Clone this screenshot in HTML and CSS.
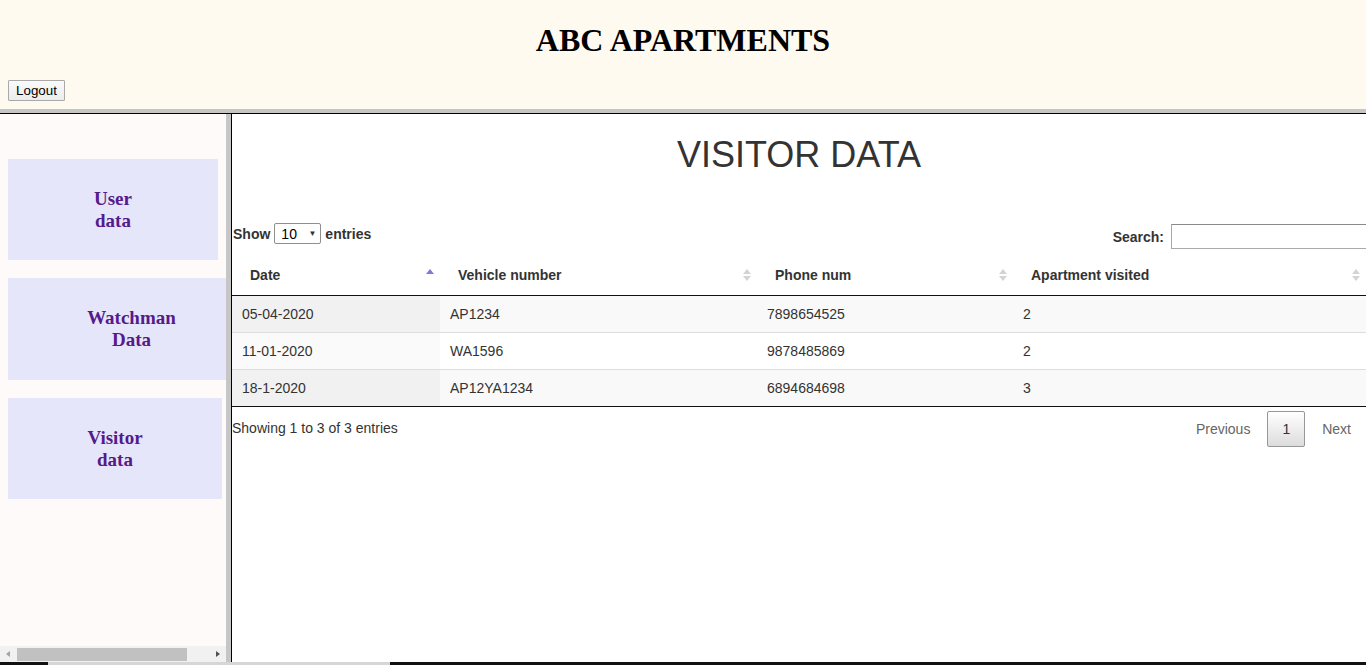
FILE: index.html
```html
<!DOCTYPE html>
<html>
<head>
<meta charset="utf-8">
<title>ABC Apartments</title>
<link rel="stylesheet" href="styles.css">
</head>
<body>
<div class="page">
  <header class="top">
    <h1 class="brand">ABC APARTMENTS</h1>
    <button class="logout">Logout</button>
  </header>
  <div class="hsep"></div>
  <div class="main">
    <nav class="side">
      <div class="side-content">
        <a class="nav-box nav-user">User<br>data</a>
        <a class="nav-box nav-watch">Watchman<br>Data</a>
        <a class="nav-box nav-visitor">Visitor<br>data</a>
      </div>
      <div class="hscroll">
        <span class="arrow-left"></span>
        <div class="track"><div class="thumb"></div></div>
        <span class="arrow-right"></span>
      </div>
    </nav>
    <div class="vsep"></div>
    <section class="content">
      <h1 class="title">VISITOR DATA</h1>
      <div class="controls">
        <label class="length">Show <span class="select"><span>10</span><span class="caret">▼</span></span> entries</label>
        <label class="filter">Search: <span class="search-input"></span></label>
      </div>
      <table class="data">
        <colgroup>
          <col class="c1"><col class="c2"><col class="c3"><col class="c4">
        </colgroup>
        <thead>
          <tr>
            <th><div class="th-in"><span>Date</span><span class="sort asc"><i class="up"></i></span></div></th>
            <th><div class="th-in"><span>Vehicle number</span><span class="sort both"><i class="up"></i><i class="down"></i></span></div></th>
            <th><div class="th-in"><span>Phone num</span><span class="sort both"><i class="up"></i><i class="down"></i></span></div></th>
            <th><div class="th-in"><span>Apartment visited</span><span class="sort both"><i class="up"></i><i class="down"></i></span></div></th>
          </tr>
        </thead>
        <tbody>
          <tr class="odd"><td>05-04-2020</td><td>AP1234</td><td>7898654525</td><td>2</td></tr>
          <tr class="even"><td>11-01-2020</td><td>WA1596</td><td>9878485869</td><td>2</td></tr>
          <tr class="odd"><td>18-1-2020</td><td>AP12YA1234</td><td>6894684698</td><td>3</td></tr>
        </tbody>
      </table>
      <div class="footer-row">
        <div class="info">Showing 1 to 3 of 3 entries</div>
        <div class="paginate">
          <span class="pbtn disabled">Previous</span>
          <span class="pbtn current">1</span>
          <span class="pbtn disabled">Next</span>
        </div>
      </div>
    </section>
  </div>
  <div class="bottom"><span class="seg1"></span><span class="seg2"></span><span class="seg3"></span></div>
</div>
</body>
</html>
```
FILE: styles.css
```css
html, body {
  margin: 0;
  padding: 0;
  overflow: hidden;
}
body {
  font-family: "Liberation Sans", Arial, sans-serif;
}
.page {
  display: flex;
  flex-direction: column;
  height: 665px;
  width: 1366px;
}
.top {
  height: 109px;
  background: #fffaf0;
  flex: none;
  display: flex;
  flex-direction: column;
  align-items: flex-start;
}
.brand {
  align-self: stretch;
  margin: 22px 0 0 0;
  text-align: center;
  font-family: "Liberation Serif", "Times New Roman", serif;
  font-weight: bold;
  font-size: 32px;
  line-height: 37px;
  color: #000;
}
.logout {
  margin: 21px 0 0 8px;
  width: 57px;
  height: 21px;
  padding: 0;
  font-family: "Liberation Sans", Arial, sans-serif;
  font-size: 13.33px;
  color: #000;
  background: linear-gradient(#fafafa, #ececec);
  border: 1px solid #a9a9a9;
  border-radius: 1px;
}
.hsep {
  flex: none;
  height: 4px;
  background: #c6c6c6;
  border-bottom: 1px solid #000;
}
.main {
  flex: 1;
  display: flex;
  min-height: 0;
}
.side {
  width: 226px;
  flex: none;
  background: #fffafa;
  display: flex;
  flex-direction: column;
  overflow: hidden;
}
.side-content {
  flex: 1;
  padding-top: 45px;
  display: flex;
  flex-direction: column;
  align-items: flex-start;
  gap: 18px;
}
.nav-box {
  margin-left: 8px;
  height: 101px;
  background: #e6e6fa;
  color: #551a8b;
  font-family: "Liberation Serif", "Times New Roman", serif;
  font-weight: bold;
  font-size: 19px;
  line-height: 22px;
  display: flex;
  align-items: center;
  justify-content: center;
  text-align: center;
  flex: none;
}
.nav-user { width: 210px; }
.nav-watch { width: 247px; height: 102px; }
.nav-visitor { width: 214px; }
.hscroll {
  flex: none;
  height: 16px;
  background: #f1f1f1;
  display: flex;
  align-items: center;
}
.arrow-left, .arrow-right {
  width: 17px;
  height: 16px;
  position: relative;
  flex: none;
}
.arrow-left::before {
  content: "";
  position: absolute;
  left: 6px;
  top: 5px;
  border-style: solid;
  border-width: 3px 4px 3px 0;
  border-color: transparent #a3a3a3 transparent transparent;
}
.arrow-right::before {
  content: "";
  position: absolute;
  left: 7px;
  top: 5px;
  border-style: solid;
  border-width: 3px 0 3px 4px;
  border-color: transparent transparent transparent #505050;
}
.track {
  flex: 1;
  height: 16px;
  display: flex;
  align-items: center;
}
.thumb {
  width: 170px;
  height: 13px;
  background: #c1c1c1;
}
.vsep {
  flex: none;
  width: 5px;
  background: #c6c6c6;
  border-right: 1px solid #000;
}
.content {
  flex: 1;
  background: #fff;
  overflow: hidden;
  color: #333;
  font-size: 14px;
}
.title {
  margin: 20px 0 0 0;
  text-align: center;
  font-weight: normal;
  font-size: 36px;
  line-height: 42px;
  color: #333;
}
.controls {
  margin-top: 48px;
  height: 25px;
  display: flex;
  justify-content: space-between;
  align-items: center;
  font-weight: bold;
  color: #333;
  margin-right: -10px;
}
.length {
  display: flex;
  align-items: center;
  gap: 4px;
  margin-left: 1px;
  position: relative;
  top: -3px;
}
.select {
  box-sizing: border-box;
  width: 47px;
  height: 21px;
  border: 1px solid #8f8f8f;
  border-radius: 2px;
  display: flex;
  align-items: center;
  justify-content: space-between;
  padding: 0 4px 0 6px;
  font-weight: normal;
  color: #000;
  background: #fff;
}
.caret {
  font-size: 8px;
  color: #333;
}
.filter {
  display: flex;
  align-items: center;
  gap: 7px;
}
.search-input {
  box-sizing: border-box;
  width: 205px;
  height: 25px;
  border: 1px solid #a9a9a9;
  border-top-color: #8a8a8a;
  background: #fff;
}
.data {
  margin-top: 9px;
  width: 100%;
  border-collapse: separate;
  border-spacing: 0;
  table-layout: fixed;
  font-size: 14px;
  color: #333;
}
.c1 { width: 208px; }
.c2 { width: 317px; }
.c3 { width: 256px; }
.c4 { width: auto; }
.data th {
  text-align: left;
  font-weight: bold;
  padding: 7px 6px 10px 18px;
  line-height: 20px;
  border-bottom: 1px solid #111;
}
.th-in {
  display: flex;
  justify-content: space-between;
  align-items: center;
}
.sort {
  display: flex;
  flex-direction: column;
  align-items: center;
  gap: 2px;
  width: 8px;
}
.sort i {
  display: block;
  width: 0;
  height: 0;
  border-left: 4px solid transparent;
  border-right: 4px solid transparent;
}
.sort .up { border-bottom: 5px solid #d4d4d4; }
.sort .down { border-top: 5px solid #d4d4d4; }
.sort.asc { position: relative; top: -4px; }
.sort.asc .up { border-bottom-color: #7b7bdc; }
.data td {
  padding: 8px 10px;
  line-height: 20px;
  border-top: 1px solid #ddd;
}
.data tbody tr:first-child td { border-top: none; }
.data tbody tr:last-child td { border-bottom: 1px solid #111; }
.data tr.odd td { background: #f9f9f9; }
.data tr.odd td:first-child { background: #f1f1f1; }
.data tr.even td { background: #fff; }
.data tr.even td:first-child { background: #fafafa; }
.footer-row {
  display: flex;
  justify-content: space-between;
  align-items: flex-start;
}
.info {
  margin-top: 11px;
  line-height: 20px;
  color: #333;
}
.paginate {
  margin-top: 4px;
  display: flex;
}
.pbtn {
  box-sizing: border-box;
  padding: 7px 14px;
  line-height: 20px;
  margin-left: 2px;
  border: 1px solid transparent;
  border-radius: 2px;
  color: #666;
}
.pbtn.current {
  color: #333;
  border-color: #979797;
  background: linear-gradient(#fff, #dcdcdc);
}
.bottom {
  flex: none;
  height: 3px;
  display: flex;
  background: #111;
}
.seg1 { width: 48px; background: #111; }
.seg2 { width: 342px; background: #d6d6d6; }
.seg3 { flex: 1; background: #111; }
```
